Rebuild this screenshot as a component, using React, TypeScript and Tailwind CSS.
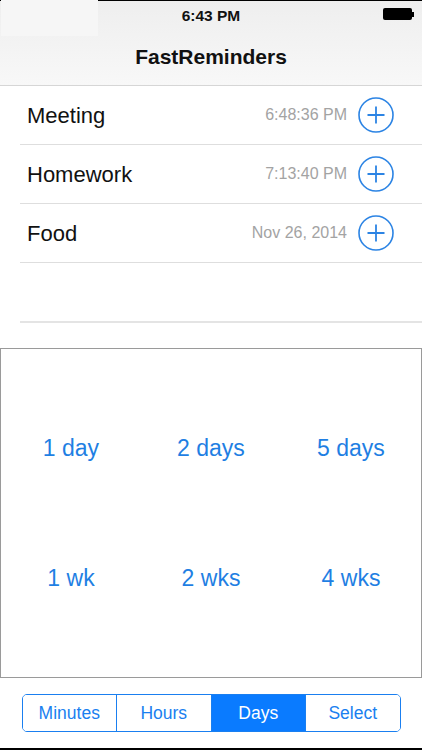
import React from 'react';

const reminders = [
  { title: 'Meeting', when: '6:48:36 PM' },
  { title: 'Homework', when: '7:13:40 PM' },
  { title: 'Food', when: 'Nov 26, 2014' },
];

const quick = ['1 day', '2 days', '5 days', '1 wk', '2 wks', '4 wks'];

const segments = ['Minutes', 'Hours', 'Days', 'Select'];

const PlusCircle = () => (
  <svg width="36" height="36" viewBox="0 0 36 36" fill="none">
    <circle cx="18" cy="18" r="17" stroke="#2c84e4" strokeWidth="1.6" />
    <path d="M18 9.5v17M9.5 18h17" stroke="#2c84e4" strokeWidth="1.8" />
  </svg>
);

const App = () => {
  return (
    <div
      className="relative w-[422px] h-[750px] bg-white flex flex-col overflow-hidden"
      style={{ fontFamily: '"Liberation Sans", Arial, sans-serif' }}
    >
      {/* status + nav bar */}
      <div className="relative h-[86px] border-t border-black border-b border-b-[#d6d6d6] bg-gradient-to-b from-[#eeeeee] to-[#f8f8f8] flex flex-col">
        <div className="absolute left-[1px] top-[-1px] w-[97px] h-[36px] bg-[#f6f6f6]"></div>
        <div className="relative h-[30px] flex items-center justify-center">
          <span className="text-[15.5px] font-bold text-[#111]">6:43 PM</span>
          <div className="absolute right-[8px] top-[7px] flex items-center">
            <div className="w-[29px] h-[12px] bg-black rounded-[2px]"></div>
            <div className="w-[2px] h-[5px] bg-black"></div>
          </div>
        </div>
        <div className="flex-1 flex items-center justify-center pb-[3px]">
          <span className="text-[21px] font-bold text-[#111]">FastReminders</span>
        </div>
      </div>

      {/* list */}
      <div className="flex flex-col">
        {reminders.map((r) => (
          <div key={r.title} className="ml-[20px] h-[59px] border-b border-[#dedede] flex items-center pr-[28px]">
            <span className="ml-[7px] text-[22px] text-[#111] flex-1">{r.title}</span>
            <span className="text-[16px] text-[#a3a3a3] mr-[11px]">{r.when}</span>
            <PlusCircle />
          </div>
        ))}
        <div className="ml-[20px] h-[60px] border-b-2 border-[#e4e4e4]"></div>
      </div>

      {/* quick picks */}
      <div className="mt-[25px] h-[330px] border border-[#9a9a9a] flex items-center">
        <div className="w-full grid grid-cols-3 grid-rows-[130px_130px]">
          {quick.map((q) => (
            <div key={q} className="flex items-center justify-center text-[23px] text-[#1f7fe3]">
              {q}
            </div>
          ))}
        </div>
      </div>

      {/* segmented control */}
      <div className="flex-1 flex items-start justify-center pt-[16px]">
        <div className="w-[379px] h-[38px] flex border border-[#1a7ff0] rounded-[5px] overflow-hidden">
          {segments.map((s, i) => (
            <div
              key={s}
              className={
                (i === 2 ? 'bg-[#0a7bff] text-white' : 'bg-white text-[#1a7ff0]') +
                (i > 0 ? ' border-l border-[#1a7ff0]' : '') +
                ' flex-1 flex items-center justify-center text-[17.5px]'
              }
            >
              {s}
            </div>
          ))}
        </div>
      </div>
      <div className="h-[2px] bg-black"></div>
    </div>
  );
};

export default App;
